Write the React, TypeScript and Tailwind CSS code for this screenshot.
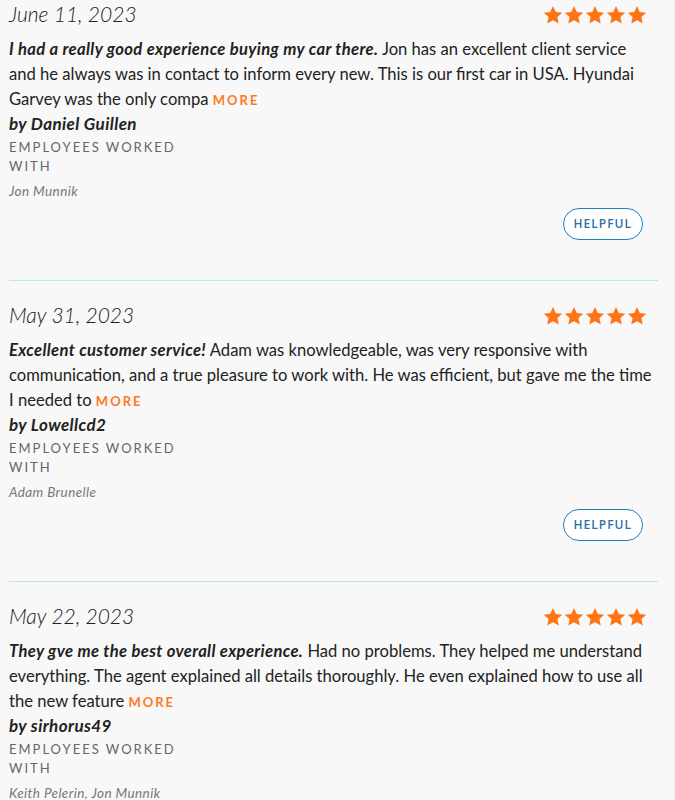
import React from 'react';

type Review = {
  date: string;
  title: string;
  body: string;
  author: string;
  employees: string;
};

const reviews: Review[] = [
  {
    date: 'June 11, 2023',
    title: 'I had a really good experience buying my car there.',
    body: 'Jon has an excellent client service and he always was in contact to inform every new. This is our first car in USA. Hyundai Garvey was the only compa',
    author: 'Daniel Guillen',
    employees: 'Jon Munnik',
  },
  {
    date: 'May 31, 2023',
    title: 'Excellent customer service!',
    body: 'Adam was knowledgeable, was very responsive with communication, and a true pleasure to work with. He was efficient, but gave me the time I needed to',
    author: 'Lowellcd2',
    employees: 'Adam Brunelle',
  },
  {
    date: 'May 22, 2023',
    title: 'They gve me the best overall experience.',
    body: 'Had no problems. They helped me understand everything. The agent explained all details thoroughly. He even explained how to use all the new feature',
    author: 'sirhorus49',
    employees: 'Keith Pelerin, Jon Munnik',
  },
];

const Star = () => (
  <svg width="20" height="20" viewBox="0 0 24 24" fill="#ff7516">
    <path d="M12 1.2l3.3 7.1 7.8.9-5.8 5.3 1.6 7.7L12 18.3l-6.9 3.9 1.6-7.7L.9 9.2l7.8-.9z" />
  </svg>
);

const ReviewCard = ({ review }: { review: Review }) => (
  <div>
    <div className="flex items-start justify-between">
      <div className="text-[21px] leading-[28px] italic font-light text-[#222]">{review.date}</div>
      <div className="flex gap-[1px] mt-[5px] mr-[11px]">
        {[0, 1, 2, 3, 4].map((i) => (
          <Star key={i} />
        ))}
      </div>
    </div>
    <p className="mt-[9px] pr-[4px] text-[16.6px] leading-[25px] text-[#222]">
      <span className="font-bold italic tracking-[0.35px]">{review.title}</span> {review.body}{' '}
      <span className="text-[13px] font-bold tracking-[2px] text-[#ff7a1f]">MORE</span>
    </p>
    <div className="text-[17px] leading-[21px] font-bold italic tracking-[0.4px] text-[#222]">by {review.author}</div>
    <div className="mt-[4px] w-[180px] text-[13px] leading-[19px] tracking-[2px] text-[#666]">EMPLOYEES WORKED WITH</div>
    <div className="mt-[6px] text-[13.5px] leading-[18px] italic tracking-[0.4px] text-[#777]">{review.employees}</div>
    <div className="flex justify-end mt-[8px] mr-[15px]">
      <button className="h-[32px] px-[10px] rounded-full border border-[#1f80c0] bg-white text-[12px] tracking-[1px] text-[#2a70a8] font-['Open_Sans',sans-serif] font-semibold">
        HELPFUL
      </button>
    </div>
    <div className="mt-[40px] mb-[20px] h-px bg-[#bde5ee]" />
  </div>
);

export default function App() {
  return (
    <div className="flex min-h-[800px] bg-[#f0f0f0] font-['Lato',sans-serif]">
      <div className="w-[673px] bg-[#f8f8f8] pl-[9px] pr-[15px]">
        {reviews.map((r) => (
          <ReviewCard key={r.date} review={r} />
        ))}
      </div>
    </div>
  );
}
